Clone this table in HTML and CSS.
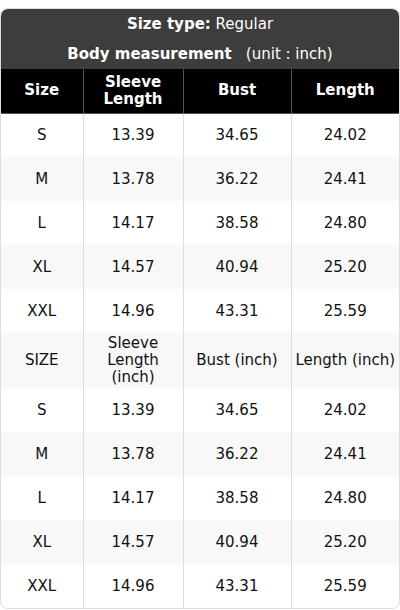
FILE: index.html
```html
<!DOCTYPE html>
<html>
<head>
<meta charset="utf-8">
<link rel="stylesheet" href="styles.css">
</head>
<body>
<div class="chart">
  <div class="title">
    <div class="line"><b>Size type:</b> Regular</div>
    <div class="line"><b>Body measurement</b>&nbsp;&nbsp;&nbsp;(unit : inch)</div>
  </div>
  <table class="sizes">
    <colgroup>
      <col class="c1"><col class="c2"><col class="c3"><col class="c4">
    </colgroup>
    <thead>
      <tr><th>Size</th><th>Sleeve Length</th><th>Bust</th><th>Length</th></tr>
    </thead>
    <tbody>
      <tr><td>S</td><td>13.39</td><td>34.65</td><td>24.02</td></tr>
      <tr><td>M</td><td>13.78</td><td>36.22</td><td>24.41</td></tr>
      <tr><td>L</td><td>14.17</td><td>38.58</td><td>24.80</td></tr>
      <tr><td>XL</td><td>14.57</td><td>40.94</td><td>25.20</td></tr>
      <tr><td>XXL</td><td>14.96</td><td>43.31</td><td>25.59</td></tr>
      <tr><td>SIZE</td><td>Sleeve Length (inch)</td><td>Bust (inch)</td><td>Length (inch)</td></tr>
      <tr><td>S</td><td>13.39</td><td>34.65</td><td>24.02</td></tr>
      <tr><td>M</td><td>13.78</td><td>36.22</td><td>24.41</td></tr>
      <tr><td>L</td><td>14.17</td><td>38.58</td><td>24.80</td></tr>
      <tr><td>XL</td><td>14.57</td><td>40.94</td><td>25.20</td></tr>
      <tr><td>XXL</td><td>14.96</td><td>43.31</td><td>25.59</td></tr>
    </tbody>
  </table>
</div>
</body>
</html>
```

FILE: styles.css
```css
html, body {
  margin: 0;
  padding: 0;
  background: #fff;
}
body {
  font-family: "DejaVu Sans", sans-serif;
  color: #111;
}
.chart {
  margin-top: 8px;
  width: 400px;
  box-sizing: border-box;
  border: 1px solid #dcdcdc;
  border-radius: 8px;
  overflow: hidden;
}
.title {
  background: #3d3d3d;
  color: #fff;
  text-align: center;
  font-size: 15px;
}
.line {
  height: 30px;
  line-height: 30px;
}
.sizes {
  width: 100%;
  border-collapse: collapse;
  table-layout: fixed;
  font-size: 15px;
  line-height: 17px;
  text-align: center;
}
.c1 { width: 82px; }
.c2 { width: 100px; }
.c3 { width: 108px; }
.c4 { width: 108px; }
.sizes th {
  background: #000;
  color: #fff;
  font-weight: bold;
  height: 44px;
  padding: 2px 3px;
  box-sizing: border-box;
  border: 1px solid #555;
  border-top: none;
}
.sizes th:first-child { border-left: none; }
.sizes th:last-child { border-right: none; }
.sizes td {
  height: 44px;
  padding: 2px 3px;
  box-sizing: border-box;
  border-left: 1px solid #dcdcdc;
  font-weight: normal;
}
.sizes td:first-child { border-left: none; }
.sizes tbody tr:nth-child(even) td { background: #f8f8f8; }
```
